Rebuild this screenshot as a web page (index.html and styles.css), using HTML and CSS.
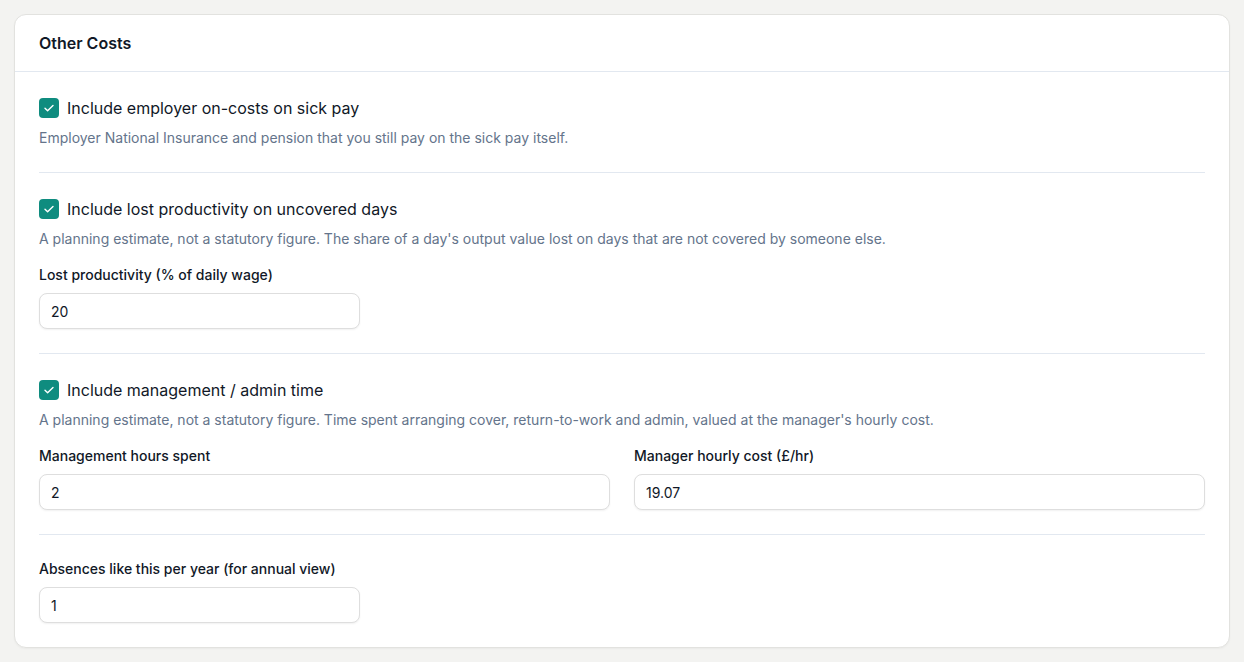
FILE: index.html
```html
<!DOCTYPE html>
<html lang="en">
  <head>
    <meta charset="UTF-8" />
    <title>Other Costs</title>
    <link rel="stylesheet" href="styles.css">
  </head>
  <body>
    <div class="card">
      <div class="card-header">Other Costs</div>

      <div class="card-body">
        <div class="section">
          <label class="check">
            <span class="box">
              <svg viewBox="0 0 20 20" width="20" height="20"><path d="M6 10.2l2.6 2.6L14 7.4" fill="none" stroke="#fff" stroke-width="1.4" stroke-linecap="round" stroke-linejoin="round"/></svg>
            </span>
            Include employer on-costs on sick pay
          </label>
          <p class="hint">Employer National Insurance and pension that you still pay on the sick pay itself.</p>
        </div>

        <div class="section">
          <label class="check">
            <span class="box">
              <svg viewBox="0 0 20 20" width="20" height="20"><path d="M6 10.2l2.6 2.6L14 7.4" fill="none" stroke="#fff" stroke-width="1.4" stroke-linecap="round" stroke-linejoin="round"/></svg>
            </span>
            Include lost productivity on uncovered days
          </label>
          <p class="hint">A planning estimate, not a statutory figure. The share of a day's output value lost on days that are not covered by someone else.</p>
          <div class="field narrow">
            <label class="field-label">Lost productivity (% of daily wage)</label>
            <input type="text" value="20" />
          </div>
        </div>

        <div class="section">
          <label class="check">
            <span class="box">
              <svg viewBox="0 0 20 20" width="20" height="20"><path d="M6 10.2l2.6 2.6L14 7.4" fill="none" stroke="#fff" stroke-width="1.4" stroke-linecap="round" stroke-linejoin="round"/></svg>
            </span>
            Include management / admin time
          </label>
          <p class="hint">A planning estimate, not a statutory figure. Time spent arranging cover, return-to-work and admin, valued at the manager's hourly cost.</p>
          <div class="field-grid">
            <div class="field">
              <label class="field-label">Management hours spent</label>
              <input type="text" value="2" />
            </div>
            <div class="field">
              <label class="field-label">Manager hourly cost (£/hr)</label>
              <input type="text" value="19.07" />
            </div>
          </div>
        </div>

        <div class="section last">
          <div class="field narrow">
            <label class="field-label">Absences like this per year (for annual view)</label>
            <input type="text" value="1" />
          </div>
        </div>
      </div>
    </div>
  </body>
</html>
```

FILE: styles.css
```css
body {
  font-family: "Inter", "Liberation Sans", sans-serif;
  background-color: #f3f3f1;
  margin: 0;
  padding: 14px;
  color: #111827;
}

.card {
  background: white;
  border: 1px solid #e2e2df;
  border-radius: 12px;
  box-shadow: 0 1px 2px rgba(0, 0, 0, 0.04);
}

.card-header {
  height: 56px;
  line-height: 57px;
  padding: 0 24px;
  font-size: 16px;
  font-weight: 600;
  border-bottom: 1px solid #e2e8f0;
}

.card-body {
  padding: 0 24px;
}

.section {
  padding: 24px 0;
  border-bottom: 1px solid #e2e8f0;
}

.section.last {
  border-bottom: none;
}

.check {
  display: flex;
  align-items: center;
  gap: 8px;
  height: 24px;
  font-size: 16px;
  color: #111827;
}

.box {
  width: 20px;
  height: 20px;
  border-radius: 4px;
  background-color: #0f8c7f;
  display: flex;
}

.hint {
  margin: 8px 0 0;
  font-size: 14px;
  line-height: 20px;
  color: #64748b;
}

.field-grid {
  display: grid;
  grid-template-columns: 1fr 1fr;
  gap: 24px;
}

.field {
  margin-top: 16px;
}

.section.last .field {
  margin-top: 0;
}

.field.narrow {
  width: 321px;
}

.field-label {
  display: block;
  font-size: 14px;
  font-weight: 500;
  line-height: 20px;
  margin-bottom: 8px;
  color: #111827;
}

input {
  box-sizing: border-box;
  width: 100%;
  height: 36px;
  padding: 0 11px;
  border: 1px solid #dedede;
  border-radius: 8px;
  font-family: inherit;
  font-size: 14px;
  color: #111827;
  box-shadow: 0 1px 2px rgba(0, 0, 0, 0.06);
  outline: none;
}
```
